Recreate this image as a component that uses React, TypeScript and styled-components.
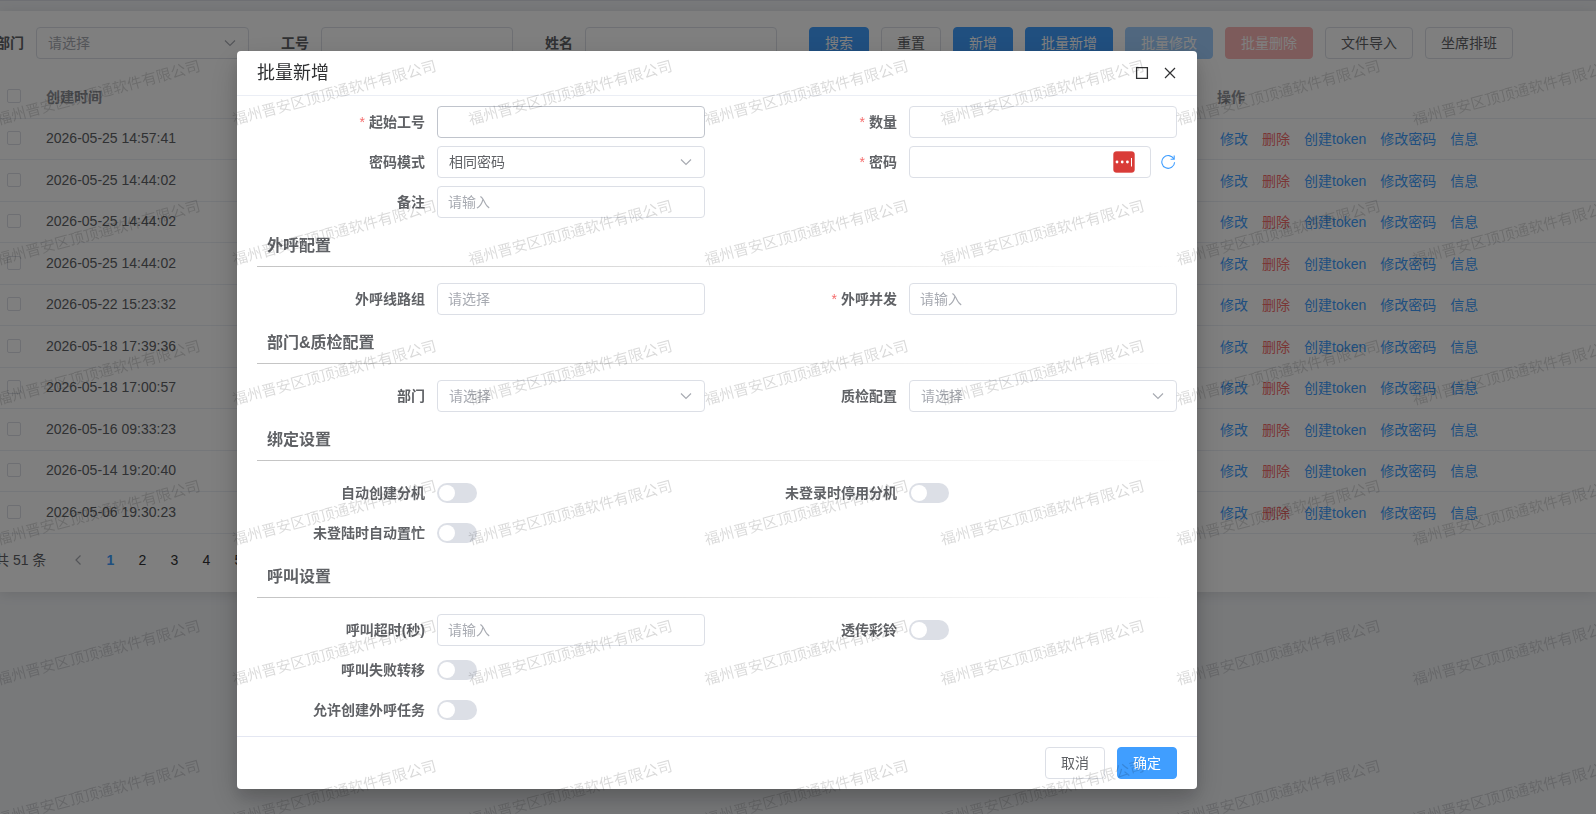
import React from "react";
import styled, { createGlobalStyle, css } from "styled-components";

const GlobalStyle = createGlobalStyle`
  *, *::before, *::after { box-sizing: border-box; }
  body {
    margin: 0;
    min-height: 100vh;
    overflow: hidden;
    background: #f0f2f5;
    color: #606266;
    font-family: "Liberation Sans", Arial, "Noto Sans CJK SC", sans-serif;
    font-size: 14px;
  }
  button, input, select { font: inherit; }
`;

/* ---------- shared controls ---------- */

type Tone = "default" | "primary" | "danger";

const Button = styled.button<{ $tone?: Tone }>`
  height: 32px;
  padding: 0 15px;
  border: 1px solid #dcdfe6;
  border-radius: 4px;
  background: #fff;
  color: #606266;
  line-height: 20px;
  white-space: nowrap;
  cursor: pointer;
  ${({ $tone }) =>
    $tone === "primary" &&
    css`
      background: #409eff;
      border-color: #409eff;
      color: #fff;
      &:disabled {
        background: #a0cfff;
        border-color: #a0cfff;
      }
    `}
  ${({ $tone }) =>
    $tone === "danger" &&
    css`
      background: #f56c6c;
      border-color: #f56c6c;
      color: #fff;
      &:disabled {
        background: #fab6b6;
        border-color: #fab6b6;
      }
    `}
`;

const field = css`
  width: 100%;
  height: 32px;
  padding: 0 11px;
  border: 1px solid #dcdfe6;
  border-radius: 4px;
  outline: none;
  background: #fff;
  color: #606266;
`;

const TextInput = styled.input<{ $active?: boolean }>`
  ${field}
  padding: 0 10px;
  ${({ $active }) => $active && "border-color: #c0c4cc;"}
  &::placeholder {
    color: #a8abb2;
    opacity: 1;
  }
`;

const SelectShell = styled.div`
  display: grid;
  align-items: center;
  width: 100%;
  > * {
    grid-area: 1 / 1;
  }
`;

const NativeSelect = styled.select<{ $empty?: boolean }>`
  ${field}
  appearance: none;
  color: ${({ $empty }) => ($empty ? "#a8abb2" : "#606266")};
`;

const Arrow = styled.svg`
  justify-self: end;
  margin-right: 13px;
  width: 12px;
  height: 12px;
  fill: none;
  stroke: #a8abb2;
  stroke-width: 1.2;
  pointer-events: none;
`;

function Select({ id, value }: { id: string; value?: string }) {
  return (
    <SelectShell>
      <NativeSelect id={id} $empty={!value}>
        <option>{value ?? "请选择"}</option>
      </NativeSelect>
      <Arrow viewBox="0 0 12 12">
        <path d="M1 3.5l5 5 5-5" />
      </Arrow>
    </SelectShell>
  );
}

const Switch = styled.input.attrs({ type: "checkbox", role: "switch" })`
  appearance: none;
  display: flex;
  align-items: center;
  width: 40px;
  height: 20px;
  margin: 0;
  padding: 2px;
  border-radius: 10px;
  background: #dcdfe6;
  &::before {
    content: "";
    width: 16px;
    height: 16px;
    border-radius: 50%;
    background: #fff;
  }
  &:checked {
    justify-content: flex-end;
    background: #409eff;
  }
`;

const Checkbox = styled.input.attrs({ type: "checkbox" })`
  appearance: none;
  display: block;
  width: 14px;
  height: 14px;
  margin: 0;
  border: 1px solid #dcdfe6;
  border-radius: 2px;
  background: #fff;
`;

/* ---------- list page ---------- */

const Page = styled.main`
  padding-top: 10px;
  border-top: 1px solid #dcdfe6;
`;

const Card = styled.section`
  padding: 16px 0;
  background: #fff;
  box-shadow: 0 2px 12px rgba(0, 0, 0, 0.1);
`;

const Filters = styled.form`
  display: flex;
  gap: 32px;
  margin-left: -4px;
`;

const FilterItem = styled.div<{ $width: number }>`
  display: grid;
  grid-template-columns: 28px ${({ $width }) => $width}px;
  gap: 12px;
  align-items: center;
  label {
    font-weight: 700;
    line-height: 20px;
  }
`;

const Actions = styled.div`
  display: flex;
  gap: 12px;
`;

const Table = styled.table`
  width: 100%;
  margin-top: 16px;
  border-spacing: 0;
  table-layout: fixed;
  th {
    height: 44px;
    color: #909399;
    font-weight: 700;
  }
  th,
  td {
    padding: 0 0 2px;
    border-bottom: 1px solid #ebeef5;
    text-align: left;
  }
  td {
    height: 41px;
  }
  tbody tr:nth-child(even) td {
    height: 42px;
  }
  th:first-child,
  td:first-child {
    width: 46px;
    padding-left: 7px;
  }
  th:nth-child(2) {
    width: 190px;
  }
  th:last-child,
  td:last-child {
    width: 388px;
    padding-left: 9px;
  }
`;

const Links = styled.div`
  display: flex;
  gap: 14px;
  padding-left: 3px;
`;

const Link = styled.a<{ $danger?: boolean }>`
  color: ${({ $danger }) => ($danger ? "#f56c6c" : "#409eff")};
  text-decoration: none;
  white-space: nowrap;
`;

const Pager = styled.nav`
  display: flex;
  align-items: center;
  height: 32px;
  margin: 10px 0 0 -5px;
`;

const Total = styled.span`
  margin-right: 16px;
  line-height: 20px;
`;

const PageButton = styled.button<{ $current?: boolean }>`
  display: grid;
  place-items: center;
  width: 32px;
  height: 32px;
  padding: 0;
  border: 0;
  background: none;
  color: ${({ $current }) => ($current ? "#409eff" : "#303133")};
  font-weight: ${({ $current }) => ($current ? 700 : 400)};
  svg {
    width: 12px;
    height: 12px;
    fill: none;
    stroke: #a8abb2;
    stroke-width: 1.2;
  }
`;

const rows = [
  "2026-05-25 14:57:41",
  "2026-05-25 14:44:02",
  "2026-05-25 14:44:02",
  "2026-05-25 14:44:02",
  "2026-05-22 15:23:32",
  "2026-05-18 17:39:36",
  "2026-05-18 17:00:57",
  "2026-05-16 09:33:23",
  "2026-05-14 19:20:40",
  "2026-05-06 19:30:23",
];

const rowActions = ["修改", "删除", "创建token", "修改密码", "信息"];

function ListPage() {
  return (
    <Page>
      <Card>
        <Filters>
          <FilterItem $width={213}>
            <label htmlFor="f-dept">部门</label>
            <Select id="f-dept" />
          </FilterItem>
          <FilterItem $width={192}>
            <label htmlFor="f-no">工号</label>
            <TextInput id="f-no" />
          </FilterItem>
          <FilterItem $width={192}>
            <label htmlFor="f-name">姓名</label>
            <TextInput id="f-name" />
          </FilterItem>
          <Actions>
            <Button type="button" $tone="primary">搜索</Button>
            <Button type="button">重置</Button>
            <Button type="button" $tone="primary">新增</Button>
            <Button type="button" $tone="primary">批量新增</Button>
            <Button type="button" $tone="primary" disabled>批量修改</Button>
            <Button type="button" $tone="danger" disabled>批量删除</Button>
            <Button type="button">文件导入</Button>
            <Button type="button">坐席排班</Button>
          </Actions>
        </Filters>
        <Table>
          <thead>
            <tr>
              <th><Checkbox aria-label="全选" /></th>
              <th>创建时间</th>
              <th />
              <th>操作</th>
            </tr>
          </thead>
          <tbody>
            {rows.map((time, i) => (
              <tr key={i}>
                <td><Checkbox aria-label={time} /></td>
                <td>{time}</td>
                <td />
                <td>
                  <Links>
                    {rowActions.map((name) => (
                      <Link key={name} href="#" $danger={name === "删除"}>{name}</Link>
                    ))}
                  </Links>
                </td>
              </tr>
            ))}
          </tbody>
        </Table>
        <Pager>
          <Total>共 51 条</Total>
          <PageButton aria-label="上一页">
            <svg viewBox="0 0 12 12"><path d="M8.5 1.5l-4.500 4.500 4.500 4.500" /></svg>
          </PageButton>
          {[1, 2, 3, 4, 5].map((n) => (
            <PageButton key={n} $current={n === 1}>{n}</PageButton>
          ))}
        </Pager>
      </Card>
    </Page>
  );
}

/* ---------- dialog ---------- */

const Overlay = styled.div`
  position: fixed;
  inset: 0;
  padding: 51px 399px 0 237px;
  background: rgba(0, 0, 0, 0.5);
`;

const Dialog = styled.div`
  border-radius: 4px;
  background: #fff;
  box-shadow: 0 12px 32px rgba(0, 0, 0, 0.16), 0 8px 16px rgba(0, 0, 0, 0.12);
`;

const DialogHeader = styled.header`
  display: flex;
  align-items: center;
  gap: 10px;
  height: 45px;
  padding: 0 20px;
  border-bottom: 1px solid #ebeef5;
  h2 {
    flex: 1;
    margin: 0;
    color: #303133;
    font-size: 18px;
    font-weight: 400;
    line-height: 24px;
  }
`;

const IconButton = styled.button`
  display: grid;
  place-items: center;
  width: 16px;
  height: 16px;
  padding: 0;
  border: 0;
  background: none;
  color: #303133;
  svg {
    width: 16px;
    height: 16px;
    fill: none;
    stroke: currentColor;
  }
`;

const WindowButtons = styled.div`
  display: flex;
  gap: 12px;
`;

const RefreshButton = styled(IconButton)`
  flex: none;
  color: #409eff;
`;

const DialogBody = styled.form`
  padding: 10px 20px;
`;

const FormGrid = styled.div`
  display: grid;
  grid-template-columns: 1fr 1fr;
  gap: 8px 24px;
`;

const FormItem = styled.div<{ $full?: boolean }>`
  display: grid;
  grid-template-columns: 168px 1fr;
  gap: 12px;
  align-items: center;
  min-height: 32px;
  ${({ $full }) => $full && "& + * { grid-column-start: 1; }"}
`;

const Label = styled.label<{ $required?: boolean }>`
  text-align: right;
  font-weight: 700;
  line-height: 20px;
  white-space: nowrap;
  ${({ $required }) =>
    $required &&
    css`
      &::before {
        content: "*";
        margin-right: 4px;
        color: #f56c6c;
        font-weight: 400;
      }
    `}
`;

const SectionTitle = styled.h3`
  height: 41px;
  margin: 8px 0 16px;
  padding: 8px 10px;
  border-bottom: 1px solid;
  border-image: linear-gradient(to right, #c4c4c4, transparent) 1;
  font-size: 16px;
  font-weight: 700;
  line-height: 24px;
`;

const PasswordRow = styled.div`
  display: flex;
  align-items: center;
  gap: 10px;
`;

const PasswordField = styled.div`
  display: grid;
  flex: 1;
  align-items: center;
  > * {
    grid-area: 1 / 1;
  }
`;

const PasswordBadge = styled.svg`
  justify-self: end;
  width: 22px;
  height: 22px;
  margin-right: 16px;
`;

const DialogFooter = styled.footer`
  display: flex;
  justify-content: flex-end;
  gap: 12px;
  padding: 10px 20px;
  border-top: 1px solid #e4e7f2;
`;

type ItemProps = {
  id: string;
  label: string;
  required?: boolean;
  full?: boolean;
  children: React.ReactNode;
};

function Item({ id, label, required, full, children }: ItemProps) {
  return (
    <FormItem $full={full}>
      <Label htmlFor={id} $required={required}>{label}</Label>
      {children}
    </FormItem>
  );
}

function BatchAddDialog() {
  return (
    <Dialog role="dialog" aria-labelledby="dialog-title">
      <DialogHeader>
        <h2 id="dialog-title">批量新增</h2>
        <WindowButtons>
          <IconButton aria-label="最大化">
            <svg viewBox="0 0 16 16"><path d="M3.600 2.600h10.800v10.800h-10.800z" strokeWidth="1.3" /></svg>
          </IconButton>
          <IconButton aria-label="关闭">
            <svg viewBox="0 0 16 16"><path d="M4 3l10 10M14 3L4 13" strokeWidth="1.2" /></svg>
          </IconButton>
        </WindowButtons>
      </DialogHeader>
      <DialogBody>
        <FormGrid>
          <Item id="start" label="起始工号" required>
            <TextInput id="start" $active />
          </Item>
          <Item id="count" label="数量" required>
            <TextInput id="count" />
          </Item>
          <Item id="mode" label="密码模式">
            <Select id="mode" value="相同密码" />
          </Item>
          <Item id="password" label="密码" required>
            <PasswordRow>
              <PasswordField>
                <TextInput id="password" />
                <PasswordBadge viewBox="0 0 22 22">
                  <rect width="22" height="22" rx="4" fill="#f0b4b2" />
                  <rect x="0.5" y="0.5" width="21" height="21" rx="3" fill="#d93c38" />
                  <g fill="#fff">
                    <circle cx="4" cy="11" r="1.400" />
                    <circle cx="9.200" cy="11" r="1.400" />
                    <circle cx="14.400" cy="11" r="1.400" />
                    <rect x="18" y="7" width="1" height="8.500" />
                  </g>
                </PasswordBadge>
              </PasswordField>
              <RefreshButton type="button" aria-label="刷新密码">
                <svg viewBox="0 0 16 16">
                  <path d="M12.900 5A6.400 6.400 0 1 0 13.600 8.200M13.200 1.500v3.800H9.600" strokeWidth="1.1" />
                </svg>
              </RefreshButton>
            </PasswordRow>
          </Item>
          <Item id="remark" label="备注">
            <TextInput id="remark" placeholder="请输入" />
          </Item>
        </FormGrid>

        <SectionTitle>外呼配置</SectionTitle>
        <FormGrid>
          <Item id="line" label="外呼线路组">
            <TextInput id="line" placeholder="请选择" />
          </Item>
          <Item id="concurrency" label="外呼并发" required>
            <TextInput id="concurrency" placeholder="请输入" />
          </Item>
        </FormGrid>

        <SectionTitle>部门&amp;质检配置</SectionTitle>
        <FormGrid>
          <Item id="dept" label="部门">
            <Select id="dept" />
          </Item>
          <Item id="quality" label="质检配置">
            <Select id="quality" />
          </Item>
        </FormGrid>

        <SectionTitle>绑定设置</SectionTitle>
        <FormGrid>
          <Item id="auto-ext" label="自动创建分机">
            <Switch id="auto-ext" />
          </Item>
          <Item id="stop-ext" label="未登录时停用分机">
            <Switch id="stop-ext" />
          </Item>
          <Item id="auto-busy" label="未登陆时自动置忙">
            <Switch id="auto-busy" />
          </Item>
        </FormGrid>

        <SectionTitle>呼叫设置</SectionTitle>
        <FormGrid>
          <Item id="timeout" label="呼叫超时(秒)">
            <TextInput id="timeout" placeholder="请输入" />
          </Item>
          <Item id="ringback" label="透传彩铃">
            <Switch id="ringback" />
          </Item>
          <Item id="fail-transfer" label="呼叫失败转移" full>
            <Switch id="fail-transfer" />
          </Item>
          <Item id="allow-task" label="允许创建外呼任务">
            <Switch id="allow-task" />
          </Item>
        </FormGrid>
      </DialogBody>
      <DialogFooter>
        <Button type="button">取消</Button>
        <Button type="button" $tone="primary">确定</Button>
      </DialogFooter>
    </Dialog>
  );
}

/* ---------- watermark ---------- */

const WatermarkLayer = styled.div`
  position: fixed;
  inset: 0;
  z-index: 10;
  overflow: hidden;
  display: grid;
  grid-template-columns: repeat(7, 236px);
  grid-auto-rows: 140px;
  padding-top: 21px;
  pointer-events: none;
`;

const Mark = styled.span`
  display: grid;
  place-items: center;
  margin-left: -40px;
  color: rgba(0, 0, 0, 0.15);
  font-family: "Noto Sans CJK SC", sans-serif;
  font-size: 15px;
  white-space: nowrap;
  transform: rotate(-15deg);
`;

function Watermark() {
  return (
    <WatermarkLayer aria-hidden="true">
      {Array.from({ length: 42 }, (_, i) => (
        <Mark key={i}>福州晋安区顶顶通软件有限公司</Mark>
      ))}
    </WatermarkLayer>
  );
}

export default function App() {
  return (
    <>
      <GlobalStyle />
      <ListPage />
      <Overlay>
        <BatchAddDialog />
      </Overlay>
      <Watermark />
    </>
  );
}
